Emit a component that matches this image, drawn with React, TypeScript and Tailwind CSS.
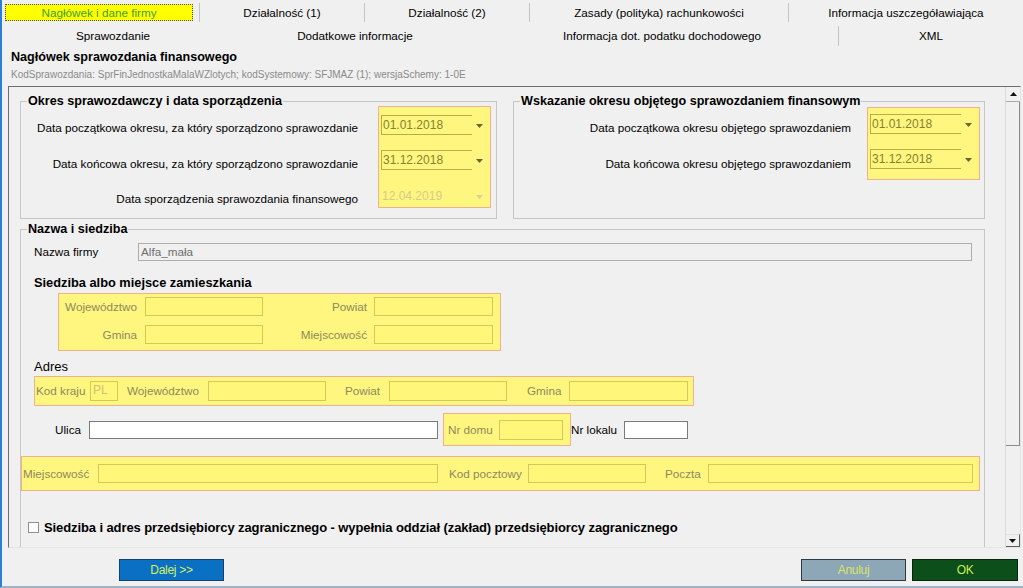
import React from "react";

const yBox = "bg-[#fff680] border border-[#efb28c]";
const yLabel = "text-[11.7px] text-[#8c8a5c] whitespace-nowrap";

function YInput({ w, h = 19, value }: { w: string; h?: number; value?: string }) {
  return (
    <div
      className={`${w} ${h === 20 ? "h-[20px]" : "h-[19px]"} bg-[#fff67a] border border-[#d4c858] text-[12px] leading-[17px] pl-[2px] text-[#cdc278]`}
    >
      {value}
    </div>
  );
}

function WInput({ w }: { w: string }) {
  return <div className={`${w} h-[18px] bg-white border border-[#7a7a7a]`} />;
}

function Arrow({ color = "#6a6630" }: { color?: string }) {
  return (
    <svg width="7" height="4" viewBox="0 0 7 4">
      <path d="M0 0h7L3.5 4z" fill={color} />
    </svg>
  );
}

function Drop({ value, disabled }: { value: string; disabled?: boolean }) {
  return (
    <div className="flex h-[20px] items-center">
      <div
        className={
          disabled
            ? "h-[20px] w-[91px] pl-[1px] text-[12px] leading-[20px] text-[#d2cd8a]"
            : "h-[20px] w-[91px] pl-[1px] text-[12px] leading-[18px] text-[#85812f] border-l border-t border-b border-[#b9ad48]"
        }
      >
        {value}
      </div>
      <div className="ml-[4px] mt-[2px]">
        <Arrow color={disabled ? "#d8d394" : "#6a6630"} />
      </div>
    </div>
  );
}

function Group({
  title,
  className,
  children,
}: {
  title: string;
  className: string;
  children: React.ReactNode;
}) {
  return (
    <fieldset className={`${className} min-w-0 border border-[#c6c6c6]`}>
      <legend className="ml-[6px] px-[1px] text-[12.6px] font-bold leading-[14px] text-black">{title}</legend>
      {children}
    </fieldset>
  );
}

export default function App() {
  const row1 = [
    { t: "Działalność (1)", w: "w-[165px]" },
    { t: "Działalność (2)", w: "w-[165px]" },
    { t: "Zasady (polityka) rachunkowości", w: "w-[259px]" },
    { t: "Informacja uszczegóławiająca", w: "w-[235px]" },
  ];

  return (
    <div className="w-[1023px] h-[588px] overflow-hidden bg-[#f0f0f0] border-l-2 border-b-2 border-l-[#2a7fd4] border-b-[#9fb4c8] font-['Liberation_Sans',Arial,sans-serif] text-black">
      {/* tabs, first row */}
      <div className="mt-[3px] flex h-[19px] items-stretch text-[11.7px]">
        <div className="w-[197px] pl-[3px]">
          <div className="flex h-[17px] w-[188px] items-center justify-center border border-dotted border-[#4a4a4a] bg-[#ffff00] text-[#3a9f3a] mt-[1px]">
            Nagłówek i dane firmy
          </div>
        </div>
        {row1.map((tab) => (
          <div key={tab.t} className={`${tab.w} flex items-center justify-center border-l border-[#c4c4c4]`}>
            {tab.t}
          </div>
        ))}
      </div>

      {/* tabs, second row */}
      <div className="mt-[4px] flex h-[20px] text-[11.7px]">
        <div className="flex w-[222px] items-center justify-center">Sprawozdanie</div>
        <div className="flex w-[262px] items-center justify-center">Dodatkowe informacje</div>
        <div className="flex w-[352px] items-center justify-center">Informacja dot. podatku dochodowego</div>
        <div className="flex flex-1 items-center justify-center border-l border-[#c4c4c4]">XML</div>
      </div>

      <div className="mt-[3px] ml-[9px] text-[12.6px] font-bold leading-[16px]">Nagłówek sprawozdania finansowego</div>
      <div className="mt-[4px] ml-[9px] text-[10px] leading-[12px] text-[#8a8a8a]">
        KodSprawozdania: SprFinJednostkaMalaWZlotych; kodSystemowy: SFJMAZ (1); wersjaSchemy: 1-0E
      </div>

      {/* scroll panel */}
      <div className="mt-[5px] ml-[6px] flex h-[462px] w-[1013px] border border-t-[#6e6e6e] border-l-[#6e6e6e] border-r-[#e4e4e4] border-b-[#e4e4e4]">
        <div className="flex-1 overflow-hidden">
          <div className="mt-[7px] flex">
            <Group title="Okres sprawozdawczy i data sporządzenia" className="ml-[11px] h-[125px] w-[477px]">
              <div className="flex">
                <div className="flex w-[337px] flex-col items-end text-[11.7px] leading-[15px] mt-[12px]">
                  <div>Data początkowa okresu, za który sporządzono sprawozdanie</div>
                  <div className="mt-[21px]">Data końcowa okresu, za który sporządzono sprawozdanie</div>
                  <div className="mt-[20px]">Data sporządzenia sprawozdania finansowego</div>
                </div>
                <div className={`${yBox} ml-[20px] -mt-[2px] flex h-[102px] w-[113px] flex-col pl-[2px] pt-[8px]`}>
                  <Drop value="01.01.2018" />
                  <div className="mt-[15px]">
                    <Drop value="31.12.2018" />
                  </div>
                  <div className="mt-[16px]">
                    <Drop value="12.04.2019" disabled />
                  </div>
                </div>
              </div>
            </Group>

            <Group title="Wskazanie okresu objętego sprawozdaniem finansowym" className="ml-[16px] h-[125px] w-[472px]">
              <div className="flex">
                <div className="flex w-[337px] flex-col items-end text-[11.7px] leading-[15px] mt-[12px]">
                  <div>Data początkowa okresu objętego sprawozdaniem</div>
                  <div className="mt-[21px]">Data końcowa okresu objętego sprawozdaniem</div>
                </div>
                <div className={`${yBox} ml-[16px] -mt-[1px] flex h-[73px] w-[113px] flex-col pl-[2px] pt-[6px]`}>
                  <Drop value="01.01.2018" />
                  <div className="mt-[15px]">
                    <Drop value="31.12.2018" />
                  </div>
                </div>
              </div>
            </Group>
          </div>

          <Group title="Nazwa i siedziba" className="mt-[3px] ml-[11px] h-[340px] w-[965px]">
            {/* nazwa firmy */}
            <div className="mt-[7px] flex h-[18px] items-center text-[11.7px]">
              <div className="ml-[13px] w-[104px]">Nazwa firmy</div>
              <div className="h-[18px] w-[834px] border border-[#adadad] bg-[#f0f0f0] pl-[2px] leading-[16px] text-[#6e6e6e]">
                Alfa_mała
              </div>
            </div>

            <div className="mt-[14px] ml-[13px] text-[12.8px] font-bold leading-[15px]">Siedziba albo miejsce zamieszkania</div>
            <div className={`${yBox} mt-[3px] ml-[37px] flex h-[58px] w-[443px] flex-col gap-[9px] pt-[3px]`}>
              <div className="flex items-center">
                <div className={`${yLabel} w-[78px] text-right`}>Województwo</div>
                <div className="ml-[8px]">
                  <YInput w="w-[118px]" />
                </div>
                <div className={`${yLabel} w-[104px] text-right`}>Powiat</div>
                <div className="ml-[7px]">
                  <YInput w="w-[119px]" />
                </div>
              </div>
              <div className="flex items-center">
                <div className={`${yLabel} w-[78px] text-right`}>Gmina</div>
                <div className="ml-[8px]">
                  <YInput w="w-[118px]" />
                </div>
                <div className={`${yLabel} w-[104px] text-right`}>Miejscowość</div>
                <div className="ml-[7px]">
                  <YInput w="w-[119px]" />
                </div>
              </div>
            </div>

            {/* adres */}
            <div className="mt-[8px] ml-[13px] text-[13px] leading-[15px]">Adres</div>
            <div className={`${yBox} mt-[2px] ml-[13px] flex h-[30px] w-[660px] items-center`}>
              <div className={`${yLabel} ml-[1px] w-[54px]`}>Kod kraju</div>
              <YInput w="w-[28px]" h={20} value="PL" />
              <div className={`${yLabel} ml-[9px] w-[81px]`}>Województwo</div>
              <YInput w="w-[118px]" h={20} />
              <div className={`${yLabel} ml-[19px] w-[44px]`}>Powiat</div>
              <YInput w="w-[118px]" h={20} />
              <div className={`${yLabel} ml-[20px] w-[42px]`}>Gmina</div>
              <YInput w="w-[119px]" h={20} />
            </div>

            <div className="mt-[7px] flex h-[33px] items-center text-[11.7px]">
              <div className="ml-[34px] w-[34px]">Ulica</div>
              <WInput w="w-[349px]" />
              <div className={`${yBox} ml-[5px] flex h-[33px] w-[128px] items-center`}>
                <div className={`${yLabel} ml-[4px] w-[51px]`}>Nr domu</div>
                <YInput w="w-[64px]" h={20} />
              </div>
              <div className="w-[53px]">Nr lokalu</div>
              <WInput w="w-[64px]" />
            </div>

            <div className={`${yBox} mt-[10px] flex h-[35px] w-[959px] items-center`}>
              <div className={`${yLabel} ml-[1px] w-[75px]`}>Miejscowość</div>
              <YInput w="w-[340px]" />
              <div className={`${yLabel} ml-[11px] w-[79px]`}>Kod pocztowy</div>
              <YInput w="w-[118px]" />
              <div className={`${yLabel} ml-[19px] w-[43px]`}>Poczta</div>
              <YInput w="w-[265px]" />
            </div>

            <div className="mt-[30px] flex h-[13px] items-center">
              <div className="ml-[7px] h-[11px] w-[11px] border border-[#8f8f8f] bg-white" />
              <div className="ml-[5px] text-[13px] font-bold leading-[15px] tracking-[-0.1px]">
                Siedziba i adres przedsiębiorcy zagranicznego - wypełnia oddział (zakład) przedsiębiorcy zagranicznego
              </div>
            </div>
          </Group>
        </div>

        {/* scrollbar */}
        <div className="flex w-[15px] flex-col border-l border-[#dadada]">
          <div className="flex h-[15px] items-center justify-center border-b border-[#a9a9a9]">
            <svg width="7" height="4" viewBox="0 0 7 4">
              <path d="M3.5 0L7 4H0z" fill="#111" />
            </svg>
          </div>
          <div className="h-[344px] border-r border-b border-r-[#8a8a8a] border-b-[#8a8a8a] bg-[#f0f0f0]" />
          <div className="flex-1" />
          <div className="flex h-[13px] items-center justify-center border-r border-b border-t border-r-[#5a5a5a] border-b-[#5a5a5a] border-t-[#e0e0e0]">
            <svg width="7" height="4" viewBox="0 0 7 4">
              <path d="M0 0h7L3.5 4z" fill="#111" />
            </svg>
          </div>
        </div>
      </div>

      {/* bottom buttons */}
      <div className="mt-[11px] flex h-[22px] text-[12px] tracking-[-0.3px]">
        <div className="ml-[117px] flex h-[22px] w-[105px] items-center justify-center border border-[#16406a] bg-[#0a70c4] text-[#d6f25a]">
          Dalej &gt;&gt;
        </div>
        <div className="ml-[577px] flex h-[22px] w-[105px] items-center justify-center border border-[#2f3a42] bg-[#8da7b6] text-[#dbe26c]">
          Anuluj
        </div>
        <div className="ml-[6px] flex h-[22px] w-[106px] items-center justify-center border border-[#06260d] bg-[#0c4f1b] text-[#c9ee55]">
          OK
        </div>
      </div>
    </div>
  );
}
